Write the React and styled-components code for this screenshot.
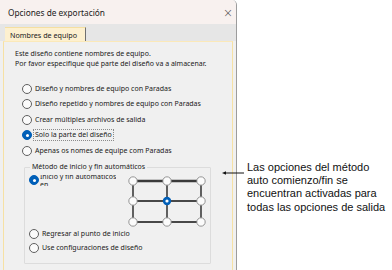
import React from "react";
import styled, { createGlobalStyle, css } from "styled-components";

const GlobalStyle = createGlobalStyle`
  html, body {
    margin: 0;
    padding: 0;
    background: #ffffff;
  }
  #root {
    width: 392px;
    height: 270px;
    overflow: hidden;
  }
`;

const uiFont = css`
  font-family: "Noto Sans", "Open Sans", sans-serif;
`;

// PAGE

const Page = styled.div`
  display: flex;
  width: 392px;
  height: 270px;
  background: #ffffff;
`;

// DIALOG

const Dialog = styled.div`
  ${uiFont}
  display: flex;
  flex-direction: column;
  width: 236px;
  height: 270px;
  flex-shrink: 0;
  background: #f0f0f0;
  border-right: 1px solid #9c9c9c;
  border-top-right-radius: 5px;
  overflow: hidden;
  color: #1a1a1a;
`;

const TitleBar = styled.div`
  display: flex;
  align-items: center;
  justify-content: space-between;
  height: 24px;
  padding: 1px 3px 0 8px;
  box-sizing: border-box;
  background: #f8f1ef;
  font-size: 8.3px;
`;

const CloseGlyph = styled.span`
  font-family: "DejaVu Sans", sans-serif;
  font-size: 12px;
  font-weight: 300;
  color: #444;
`;

const TabStrip = styled.div`
  display: flex;
  align-items: flex-end;
  height: 17px;
  padding: 0 2px 0 5px;
  box-sizing: border-box;
  background: #e6e6e6;
`;

const Tab = styled.div`
  display: flex;
  align-items: center;
  height: 13px;
  padding: 0 8px 0 5px;
  background: #fdf0cf;
  border-right: 1px solid #707070;
  border-top: 1px solid #f5dfa1;
  font-size: 7.2px;
`;

const Panel = styled.div`
  flex: 1;
  margin: 0 3px 0 3px;
  padding: 7px 0 0 11px;
  background: #f0f0f0;
  border: 1px solid #f6e1a4;
  border-top-color: #fbe9b9;
  border-bottom: none;
  font-size: 7px;
`;

const Intro = styled.p`
  margin: 0 0 14px;
  line-height: 10px;
`;

const RadioList = styled.div`
  display: flex;
  flex-direction: column;
  gap: 4.6px;
  padding-left: 7px;
`;

const RadioRow = styled.div`
  display: flex;
  align-items: center;
  gap: 2px;
  height: 11px;
`;

const RadioDot = styled.span`
  position: relative;
  width: 10px;
  height: 10px;
  box-sizing: border-box;
  flex-shrink: 0;
  border-radius: 50%;
  border: 1px solid ${p => (p.checked ? "#005fb8" : "#5f5f5f")};
  background: ${p => (p.checked ? "#005fb8" : "#fbfbfb")};
  &::after {
    content: "";
    display: ${p => (p.checked ? "block" : "none")};
    position: absolute;
    left: 2.5px;
    top: 2.5px;
    width: 3px;
    height: 3px;
    border-radius: 50%;
    background: #ffffff;
  }
`;

const RadioText = styled.span`
  padding: 0 1px;
  line-height: 10px;
  outline: ${p => (p.focused ? "1px dotted #8a8a8a" : "none")};
`;

// GROUP BOX

const Group = styled.fieldset`
  margin: 7px 0 0 9px;
  width: 187px;
  height: 101px;
  box-sizing: border-box;
  padding: 0 0 0 4px;
  border: 1px solid #dcdcdc;
  border-radius: 1px;
`;

const Legend = styled.legend`
  padding: 0 2px;
  margin-left: 1px;
  font-size: 7px;
  line-height: 8px;
`;

const GroupTop = styled.div`
  display: flex;
  align-items: flex-start;
  margin-top: 4px;
`;

const ClippedLabel = styled.div`
  display: flex;
  align-items: flex-start;
  gap: 1px;
  width: 99px;
  flex-shrink: 0;
`;

const ClippedText = styled.div`
  height: 11px;
  overflow: hidden;
  line-height: 8px;
  white-space: nowrap;
  & > span {
    display: block;
  }
  & > span:first-child {
    margin-top: -2px;
  }
`;

const Diagram = styled.svg`
  display: block;
  margin-top: 1px;
`;

const GroupList = styled.div`
  display: flex;
  flex-direction: column;
  gap: 3px;
  margin-top: 1px;
`;

// ANNOTATION

const Note = styled.div`
  position: relative;
  padding: 161px 0 0 10px;
  font-family: "Liberation Sans", Arial, sans-serif;
  font-size: 11px;
  line-height: 13.2px;
  color: #111;
`;

const Leader = styled.svg`
  position: absolute;
  left: -15px;
  top: 170px;
`;

const options = [
  { label: "Diseño y nombres de equipo con Paradas" },
  { label: "Diseño repetido y nombres de equipo con Paradas" },
  { label: "Crear múltiples archivos de salida" },
  { label: "Solo la parte del diseño", checked: true, focused: true },
  { label: "Apenas os nomes de equipe com Paradas" },
];

const cols = [5, 39, 73];
const rows = [5, 25, 46];

const GridDiagram = () => (
  <Diagram width="79" height="51" viewBox="0 0 79 51">
    <line x1={cols[0]} y1={rows[0]} x2={cols[2]} y2={rows[0]} stroke="#3a3a3a" strokeWidth="2.4" />
    <line x1={cols[0]} y1={rows[1]} x2={cols[2]} y2={rows[1]} stroke="#111" strokeWidth="1.3" />
    <line x1={cols[0]} y1={rows[2]} x2={cols[2]} y2={rows[2]} stroke="#111" strokeWidth="1.3" />
    {cols.map(x => (
      <line key={x} x1={x} y1={rows[0]} x2={x} y2={rows[2]} stroke="#111" strokeWidth="1.3" />
    ))}
    {rows.map(y =>
      cols.map(x => {
        const center = x === cols[1] && y === rows[1];
        return center ? (
          <g key={`${x}-${y}`}>
            <circle cx={x} cy={y} r="4.2" fill="#005fb8" />
            <circle cx={x} cy={y} r="1.6" fill="#fff" />
          </g>
        ) : (
          <circle key={`${x}-${y}`} cx={x} cy={y} r="4.2" fill="#fbfbfb" stroke="#8a8a8a" strokeWidth="0.9" />
        );
      })
    )}
  </Diagram>
);

const App = () => {
  return (
    <>
      <GlobalStyle />
      <Page>
        <Dialog>
          <TitleBar>
            <span>Opciones de exportación</span>
            <CloseGlyph>×</CloseGlyph>
          </TitleBar>
          <TabStrip>
            <Tab>Nombres de equipo</Tab>
          </TabStrip>
          <Panel>
            <Intro>
              Este diseño contiene nombres de equipo.
              <br />
              Por favor especifique qué parte del diseño va a almacenar.
            </Intro>
            <RadioList>
              {options.map(o => (
                <RadioRow key={o.label}>
                  <RadioDot checked={o.checked} />
                  <RadioText focused={o.focused}>{o.label}</RadioText>
                </RadioRow>
              ))}
            </RadioList>
            <Group>
              <Legend>Método de inicio y fin automáticos</Legend>
              <GroupTop>
                <ClippedLabel>
                  <RadioDot checked />
                  <ClippedText>
                    <span>Inicio y fin automáticos</span>
                    <span>en</span>
                  </ClippedText>
                </ClippedLabel>
                <GridDiagram />
              </GroupTop>
              <GroupList>
                <RadioRow>
                  <RadioDot />
                  <RadioText>Regresar al punto de inicio</RadioText>
                </RadioRow>
                <RadioRow>
                  <RadioDot />
                  <RadioText>Use configuraciones de diseño</RadioText>
                </RadioRow>
              </GroupList>
            </Group>
          </Panel>
        </Dialog>
        <Note>
          <Leader width="22" height="6" viewBox="0 0 22 6">
            <line x1="3" y1="3" x2="22" y2="3" stroke="#111" strokeWidth="1" />
            <path d="M0 3 L4 1.2 L4 4.8 Z" fill="#111" />
          </Leader>
          Las opciones del método
          <br />
          auto comienzo/fin se
          <br />
          encuentran activadas para
          <br />
          todas las opciones de salida
        </Note>
      </Page>
    </>
  );
};

export default App;
